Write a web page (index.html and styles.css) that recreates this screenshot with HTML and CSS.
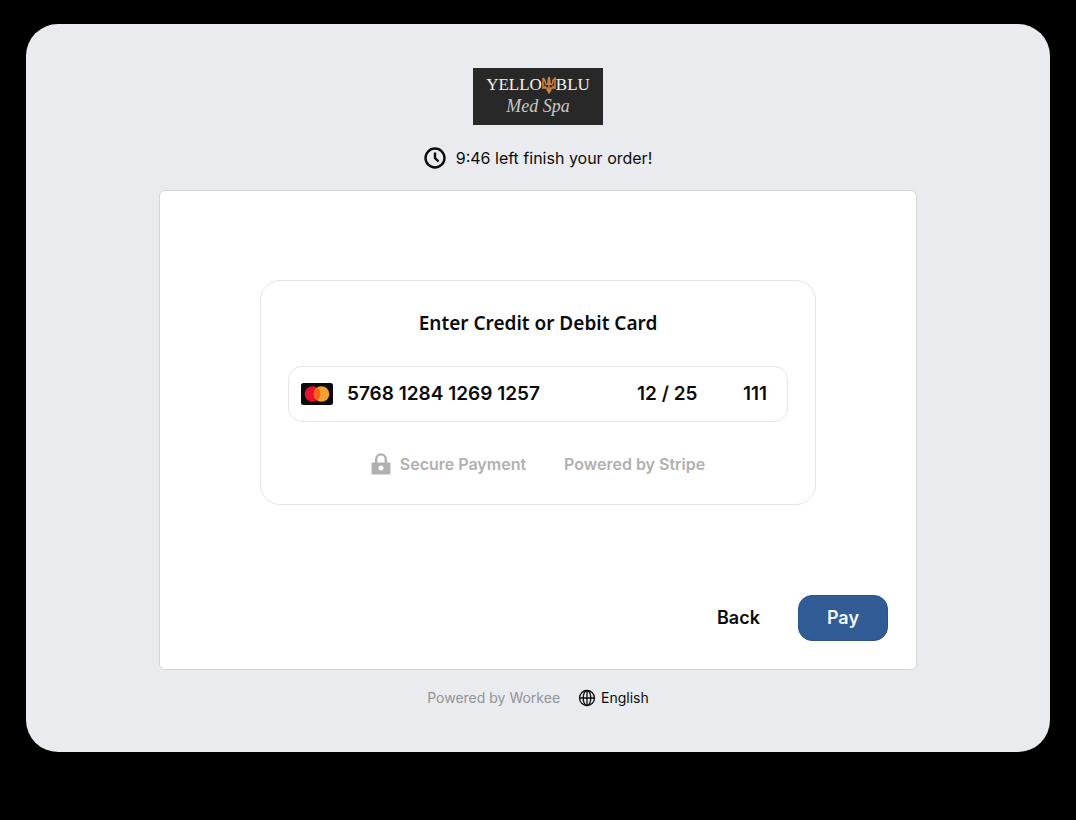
FILE: index.html
```html
<!DOCTYPE html>
<html lang="en">
<head>
<meta charset="utf-8">
<meta name="viewport" content="width=device-width, initial-scale=1">
<title>Payment</title>
<link rel="stylesheet" href="styles.css">
</head>
<body>
<div class="page">
  <header class="header">
    <div class="logo">
      <div class="logo-name">
        <span>YELLO</span>
        <svg class="trident" viewBox="0 0 14 18" aria-hidden="true">
          <path d="M1 2v10h4.200c.2 2 .8 3.400 1.800 4.800 1-1.400 1.600-2.800 1.800-4.800H13V2c-1.800 1.200-2.400 2.800-2.300 5M1 2c1.800 1.200 2.400 2.800 2.300 5M7 1v15M7 1c-1 2-.6 4-1 6S4 9 3.300 7M7 1c1 2 .6 4 1 6s2 2 2.700 0M3 12V9.500M11 12V9.500M4.500 14h5"/>
        </svg>
        <span>BLU</span>
      </div>
      <div class="logo-sub">Med Spa</div>
    </div>
    <p class="timer">
      <svg class="clock" viewBox="0 0 22 22" aria-hidden="true">
        <circle cx="11" cy="11" r="9.500"/>
        <path d="M11 5.500V11l3.500 3.500"/>
      </svg>
      <span>9:46 left finish your order!</span>
    </p>
  </header>

  <main class="card">
    <form class="form">
      <section class="panel">
        <h1 class="title">Enter Credit or Debit Card</h1>
        <div class="field">
          <svg class="brand" viewBox="0 0 32 22" role="img" aria-label="Mastercard">
            <rect width="32" height="22" rx="2.500" fill="#0b0b0d"/>
            <circle cx="11.500" cy="11" r="7.800" fill="#e8102c"/>
            <circle cx="20.500" cy="11" r="7.800" fill="#f5a030"/>
            <path d="M16 4.600a7.800 7.800 0 0 1 0 12.800a7.800 7.800 0 0 1 0-12.800z" fill="#f96316"/>
          </svg>
          <input class="input number" type="text" inputmode="numeric" aria-label="Card number" value="5768 1284 1269 1257">
          <input class="input expiry" type="text" inputmode="numeric" aria-label="Expiry date" value="12 / 25">
          <input class="input cvc" type="text" inputmode="numeric" aria-label="Security code" value="111">
        </div>
        <div class="notes">
          <span class="secure">
            <svg class="lock" viewBox="0 0 20 22" aria-hidden="true">
              <path d="M5.200 10V6.200a4.800 4.800 0 0 1 9.600 0V10" fill="none" stroke="#b0b0b0" stroke-width="2.400"/>
              <rect x=".5" y="9.500" width="19" height="12" rx="1" fill="#b0b0b0"/>
              <circle cx="10" cy="15" r="2.500" fill="#fff"/>
            </svg>
            <span>Secure Payment</span>
          </span>
          <span>Powered by Stripe</span>
        </div>
      </section>
      <div class="actions">
        <button class="btn back" type="button">Back</button>
        <button class="btn pay" type="submit">Pay</button>
      </div>
    </form>
  </main>

  <footer class="footer">
    <span>Powered by Workee</span>
    <button class="language" type="button">
      <svg class="globe" viewBox="0 0 18 18" aria-hidden="true">
        <circle cx="9" cy="9" r="7.500"/>
        <ellipse cx="9" cy="9" rx="3.800" ry="7.500"/>
        <path d="M1.500 9h15M9 1.500v15"/>
      </svg>
      <span>English</span>
    </button>
  </footer>
</div>
</body>
</html>
```
FILE: styles.css
```css
* {
  box-sizing: border-box;
}

body {
  margin: 0;
  padding: 24px 26px 68px;
  background: #000;
  color: #0b0b0b;
  font-family: Inter, "Liberation Sans", sans-serif;
}

.page {
  display: flex;
  flex-direction: column;
  align-items: center;
  padding: 44px 24px;
  border-radius: 32px;
  background: #eaebee;
}

.header {
  display: flex;
  flex-direction: column;
  align-items: center;
  gap: 21px;
}

.logo {
  display: flex;
  flex-direction: column;
  align-items: center;
  width: 130px;
  padding: 7px 0 8px;
  background: #282828;
  color: #f4f4f4;
}

.logo-name {
  display: flex;
  align-items: center;
  font-family: "Liberation Serif", serif;
  font-size: 17px;
  line-height: 20px;
}

.trident {
  width: 14px;
  height: 18px;
  fill: none;
  stroke: #cf8444;
  stroke-width: 1.500;
}

.logo-sub {
  color: #c8c8c8;
  font-family: "Liberation Serif", serif;
  font-size: 18px;
  font-style: italic;
  line-height: 22px;
}

.timer {
  display: flex;
  align-items: center;
  gap: 10px;
  margin: 0;
  font-size: 16px;
  line-height: 24px;
}

.clock {
  width: 22px;
  height: 22px;
  fill: none;
  stroke: #0b0b0b;
  stroke-width: 2.400;
}

.card {
  width: 100%;
  max-width: 758px;
  margin-top: 20px;
  padding: 89px 28px 28px;
  border: 1px solid #d5d6da;
  border-radius: 6px;
  background: #fff;
}

.panel {
  max-width: 556px;
  margin: 0 auto;
  padding: 28px 27px;
  border: 1px solid #e4e4e4;
  border-radius: 20px;
}

.title {
  margin: 0 0 29px;
  font-family: "Noto Sans", sans-serif;
  font-size: 19px;
  font-weight: 600;
  line-height: 28px;
  text-align: center;
}

.field {
  display: flex;
  align-items: center;
  height: 56px;
  padding: 0 12px;
  border: 1px solid #e4e4e4;
  border-radius: 14px;
}

.brand {
  flex: none;
  width: 32px;
  height: 22px;
  margin-right: 14px;
}

.input {
  min-width: 0;
  padding: 0;
  border: 0;
  background: none;
  color: inherit;
  font: 600 19px/24px Inter, sans-serif;
}

.number {
  flex: 1;
}

.expiry {
  width: 72px;
  margin-right: 34px;
}

.cvc {
  width: 32px;
}

.notes {
  display: flex;
  justify-content: center;
  gap: 38px;
  margin-top: 30px;
  color: #b0b0b0;
  font-size: 16px;
  font-weight: 600;
  line-height: 24px;
}

.secure {
  display: flex;
  align-items: center;
  gap: 9px;
}

.lock {
  width: 20px;
  height: 22px;
}

.actions {
  display: flex;
  justify-content: flex-end;
  gap: 10px;
  margin-top: 90px;
}

.btn {
  height: 46px;
  padding: 0 28px;
  border: 0;
  border-radius: 14px;
  background: none;
  color: inherit;
  font: 600 18px/24px Inter, sans-serif;
}

.pay {
  border: 1px solid #2a5189;
  background: #325c95;
  color: #f4f8ff;
}

.footer {
  display: flex;
  align-items: center;
  gap: 18px;
  margin-top: 18px;
  color: #929396;
  font-size: 14px;
  line-height: 20px;
}

.language {
  display: flex;
  align-items: center;
  gap: 5px;
  padding: 0;
  border: 0;
  background: none;
  color: #0b0b0b;
  font: inherit;
}

.globe {
  width: 18px;
  height: 18px;
  fill: none;
  stroke: #0b0b0b;
  stroke-width: 1.300;
}
```
